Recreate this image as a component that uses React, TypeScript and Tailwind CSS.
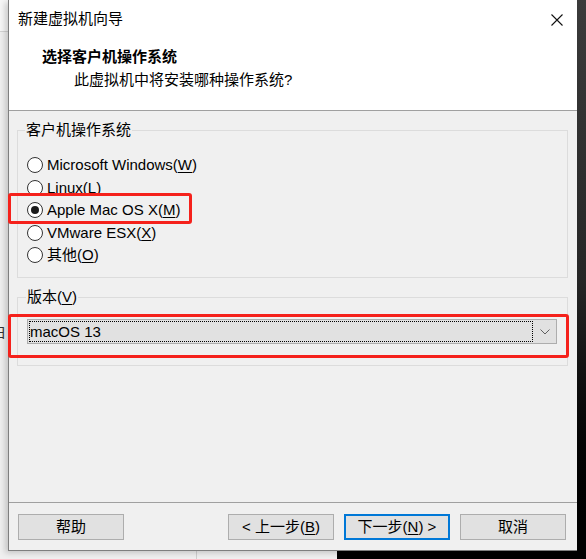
import React from "react";

const FONT = "font-['Liberation_Sans','Noto_Sans_CJK_SC',sans-serif]";

function Radio({ label, accel, after, checked }: { label: string; accel: string; after?: string; checked?: boolean }) {
  return (
    <div className="flex h-[22.5px] items-center">
      <div className="flex h-[16px] w-[16px] items-center justify-center rounded-full border border-[#333333] bg-white">
        {checked && <div className="h-[8px] w-[8px] rounded-full bg-[#1a1a1a]" />}
      </div>
      <span className="ml-[4px] text-[15px] leading-[20px] text-black">
        {label}(<u className="underline-offset-2">{accel}</u>){after}
      </span>
    </div>
  );
}

function Btn({ children, focused }: { children: React.ReactNode; focused?: boolean }) {
  return (
    <div
      className={
        "flex h-[26px] w-[106px] items-center justify-center bg-[#e1e1e1] text-[15px] leading-[20px] text-black " +
        (focused ? "border-2 border-[#0078d7]" : "border border-[#adadad]")
      }
    >
      {children}
    </div>
  );
}

export default function App() {
  return (
    <div className={"relative h-[559px] w-[586px] overflow-hidden bg-[#f0f0f0] " + FONT}>
      {/* desktop background bits */}
      <div className="absolute left-0 top-0 h-[32px] w-[8px] border-b border-[#d4d4d4] bg-[#f7f7f7]" />
      <span className="absolute left-[-9px] top-[322px] text-[15px] leading-[20px] text-[#333]">白</span>
      <div className="absolute left-[577px] top-0 h-[559px] w-[9px] bg-gradient-to-b from-[#3c3c3c] via-[#262626] to-[#000000]" />
      <div className="absolute left-[337px] top-[551px] h-[8px] w-[249px] bg-black" />
      <div className="absolute left-[196px] top-[551px] h-[8px] w-px bg-[#d0d0d0]" />

      {/* window */}
      <div className="absolute left-[8px] top-0 flex h-[551px] w-[569px] flex-col border-b border-l border-[#7f7f7f] shadow-[-3px_2px_6px_rgba(0,0,0,0.18)]">
        {/* header */}
        <div className="h-[111px] shrink-0 border-b border-[#a0a0a0] bg-white">
          <div className="flex h-[38px] items-center justify-between pl-[9px] pr-[14px]">
            <span className="text-[15px] leading-[20px] text-black">新建虚拟机向导</span>
            <svg width="12" height="12" viewBox="0 0 12 12" className="mt-[1px]">
              <path d="M0.5 0.5 L11.5 11.5 M11.5 0.5 L0.5 11.5" stroke="#111" strokeWidth="1.1" fill="none" />
            </svg>
          </div>
          <div className="mt-[9px] pl-[33px] text-[15px] font-bold leading-[20px] text-black">选择客户机操作系统</div>
          <div className="mt-[3px] pl-[65px] text-[15px] leading-[20px] text-black">此虚拟机中将安装哪种操作系统?</div>
        </div>

        {/* body */}
        <div className="flex flex-1 flex-col bg-[#f0f0f0] pl-[8px]">
          <div className="relative mt-[19px] h-[148px] w-[551px] border border-[#dcdcdc]">
            <span className="absolute left-[7px] top-[-11px] bg-[#f0f0f0] px-[1px] text-[15px] leading-[20px] text-black">
              客户机操作系统
            </span>
            <div className="flex flex-col pl-[9px] pt-[23px]">
              <Radio label="Microsoft Windows" accel="W" />
              <Radio label="Linux" accel="L" />
              <Radio label="Apple Mac OS X" accel="M" checked />
              <Radio label="VMware ESX" accel="X" />
              <Radio label="其他" accel="O" />
            </div>
          </div>

          <div className="relative mt-[19px] h-[69px] w-[551px] border border-[#dcdcdc]">
            <span className="absolute left-[8px] top-[-11px] bg-[#f0f0f0] px-[1px] text-[15px] leading-[20px] text-black">
              版本(<u className="underline-offset-2">V</u>)
            </span>
            <div className="ml-[9px] mt-[21px] flex h-[25px] w-[530px] items-center border border-[#adadad] bg-[#e1e1e1] pl-[1px]">
              <div className="flex h-[21px] w-[504px] items-center border border-dotted border-black text-[15px] leading-[20px] text-black">
                macOS 13
              </div>
              <div className="flex flex-1 items-center justify-center">
                <svg width="10" height="6" viewBox="0 0 10 6">
                  <path d="M0.5 0.5 L5 5 L9.5 0.5" stroke="#606060" strokeWidth="1" fill="none" />
                </svg>
              </div>
            </div>
          </div>
        </div>

        {/* footer */}
        <div className="flex h-[48px] shrink-0 items-start border-t border-[#a0a0a0] bg-[#f0f0f0] pl-[9px] pr-[11px] pt-[11px]">
          <Btn>帮助</Btn>
          <div className="ml-auto flex gap-[10px]">
            <Btn>
              &lt; 上一步(<u className="underline-offset-2">B</u>)
            </Btn>
            <Btn focused>
              下一步(<u className="underline-offset-2">N</u>) &gt;
            </Btn>
            <Btn>取消</Btn>
          </div>
        </div>
      </div>

      {/* red annotations */}
      <div className="absolute left-[8px] top-[193px] h-[31px] w-[184px] rounded-[3px] border-[3px] border-[#f5211b]" />
      <div className="absolute left-[8px] top-[314px] h-[44px] w-[561px] rounded-[3px] border-[3px] border-[#f5211b]" />
    </div>
  );
}
